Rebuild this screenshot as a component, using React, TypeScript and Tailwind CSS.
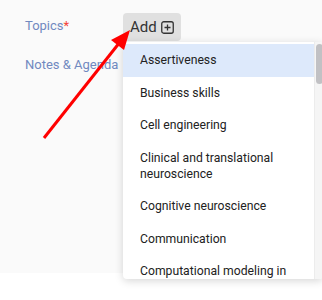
const topics = [
  "Assertiveness",
  "Business skills",
  "Cell engineering",
  "Clinical and translational neuroscience",
  "Cognitive neuroscience",
  "Communication",
  "Computational modeling in",
];

function PlusBox() {
  return (
    <svg width="13" height="13" viewBox="0 0 13 13" fill="none" className="ml-1">
      <rect x="0.75" y="0.75" width="11.5" height="11.5" rx="2" stroke="#333" strokeWidth="1.3" />
      <path d="M6.5 3.5v6M3.5 6.5h6" stroke="#333" strokeWidth="1.3" />
    </svg>
  );
}

export default function App() {
  return (
    <div className="relative h-[300px] w-[322px] overflow-hidden bg-white" style={{ fontFamily: "Roboto, 'Liberation Sans', sans-serif" }}>
      <div className="h-[273px] bg-[#fafafa] pl-[25px] pt-[13px]">
        <div className="flex items-start">
          <div className="w-[98px] pt-[3px] text-[13px] text-[#7189c0]">
            Topics<span className="text-[#f44336]">*</span>
          </div>
          <button type="button" className="flex h-[28px] items-center rounded bg-[#e0e0e0] px-[7px] text-[15px] text-[#333]">
            Add
            <PlusBox />
          </button>
        </div>
        <div className="mt-[14px] text-[13px] text-[#7189c0]">Notes &amp; Agenda</div>
      </div>

      <div className="absolute left-[123px] top-[42px] flex h-[237px] w-[200px] overflow-hidden rounded bg-white shadow-[0_2px_8px_rgba(0,0,0,0.16)]">
        <ul className="flex-1 pt-[2px]">
          {topics.map((t, i) => (
            <li
              key={t}
              className={`px-[17px] py-[8.25px] text-[12.2px] leading-[16px] text-[#222] ${i === 0 ? "bg-[#dde9fb]" : ""}`}
            >
              {t}
            </li>
          ))}
        </ul>
        <div className="w-[9px] border-l border-[#ececec] bg-[#f5f5f5] pt-[2px]">
          <div className="mx-auto h-[40px] w-[7px] rounded-full bg-[#c1c1c4]" />
        </div>
      </div>

      <svg className="absolute left-0 top-0" width="322" height="300" viewBox="0 0 322 300">
        <line x1="44" y1="138" x2="120" y2="42" stroke="#ff0000" strokeWidth="3" />
        <polygon points="130,30 111,40 124,50" fill="#ff0000" />
      </svg>
    </div>
  );
}
